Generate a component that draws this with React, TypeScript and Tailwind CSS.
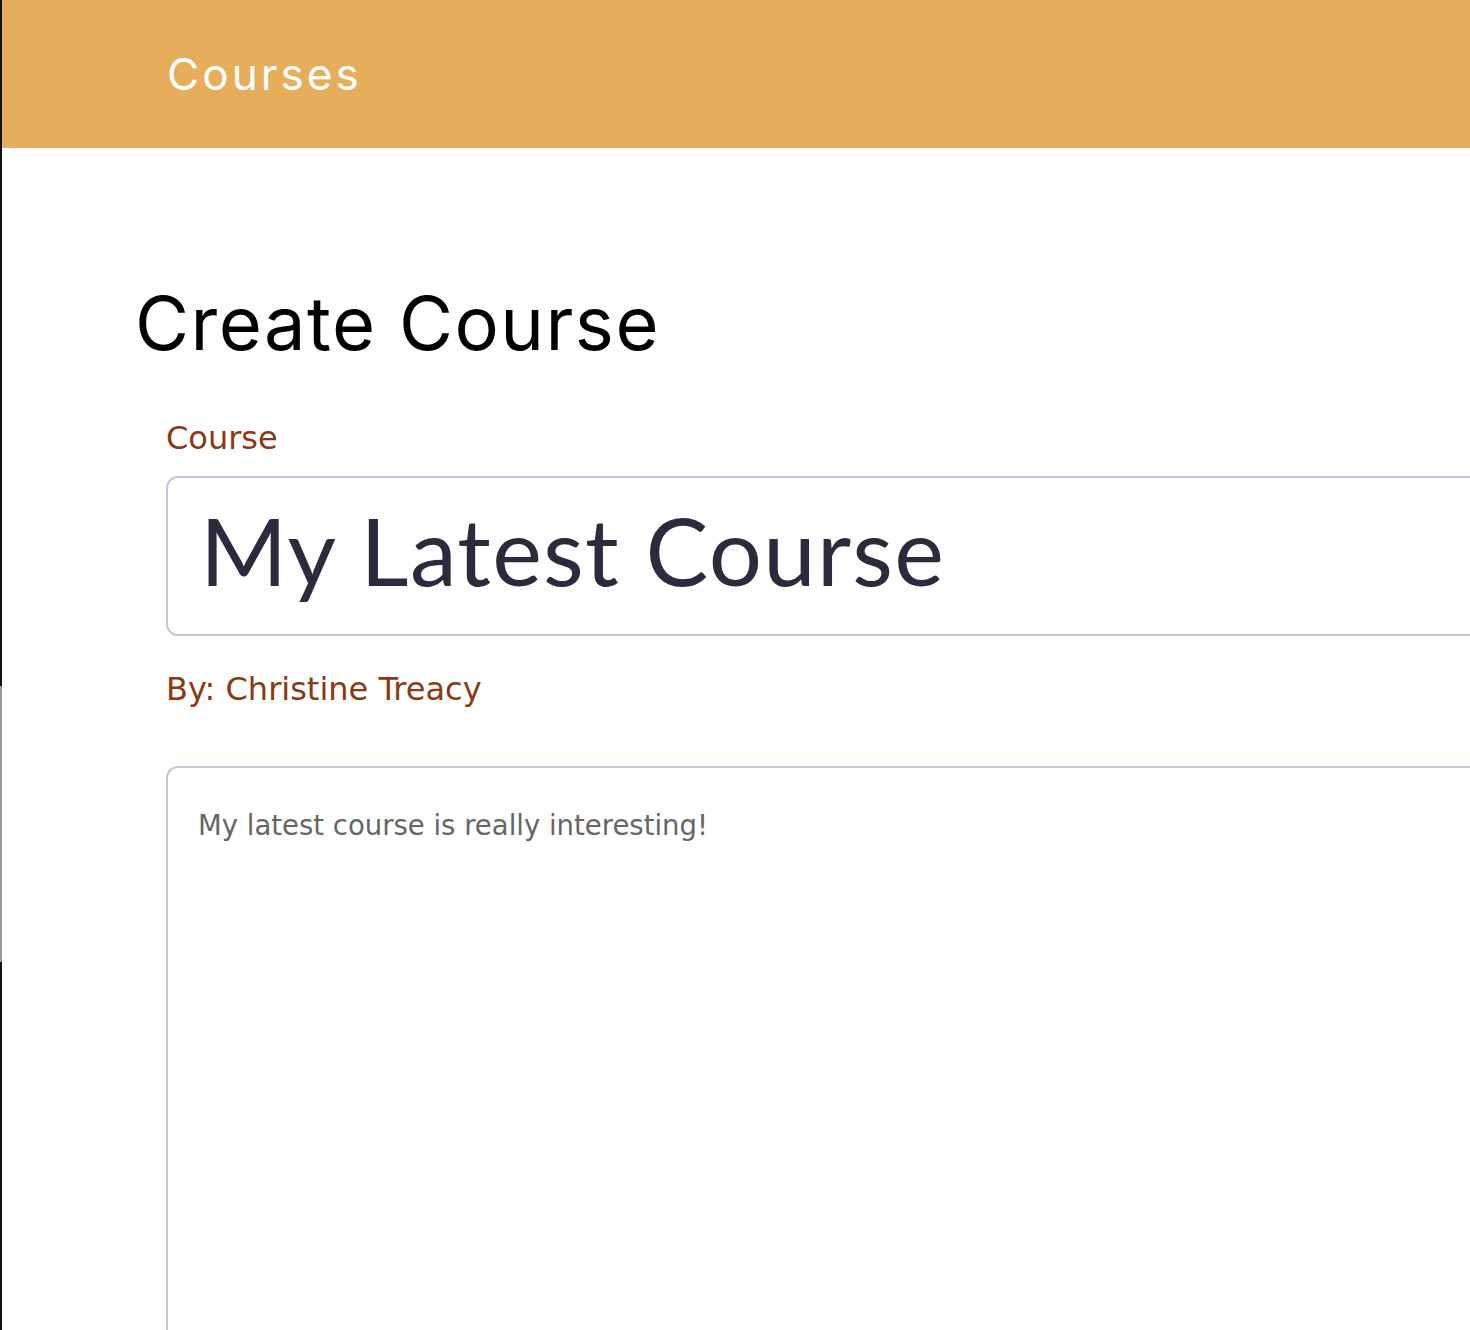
import React from "react";

const heading = { fontFamily: "Inter, 'Noto Sans', sans-serif" };
const body = { fontFamily: "'DejaVu Sans', 'Noto Sans', sans-serif" };
const big = { fontFamily: "Lato, 'Noto Sans', sans-serif" };

export default function App() {
  return (
    <div className="flex min-h-[1330px] w-[1470px] overflow-hidden bg-white">
      {/* left window edge */}
      <div className="flex w-[2px] shrink-0 flex-col">
        <div className="h-[686px] bg-[#111111]" />
        <div className="h-[276px] bg-[#9a9a9a]" />
        <div className="flex-1 bg-[#111111]" />
      </div>

      <div className="flex min-w-0 flex-1 flex-col">
        <header className="flex h-[148px] items-center bg-[#e6ae5a] pl-[165px]">
          <h1 className="text-[44px] leading-none tracking-[0.07em] text-white" style={heading}>
            Courses
          </h1>
        </header>

        <main className="pl-[133px] pt-[138px]">
          <h2 className="text-[74px] leading-none tracking-[0.02em] text-black" style={heading}>
            Create Course
          </h2>

          <form className="flex flex-col pl-[31px] pt-[62px]" style={body}>
            <label className="text-[32px] leading-none text-[#8a3a12]">Course</label>
            <input
              className="mt-[22px] h-[160px] w-[1400px] rounded-[12px] border-2 border-[#c9c3d8] px-[32px] pb-[14px] text-[94px] tracking-[0.014em] text-[#2e293d] outline-none"
              defaultValue="My Latest Course"
              style={big}
            />
            <p className="mt-[37px] text-[32px] leading-none text-[#8a3a12]">
              By: Christine Treacy
            </p>
            <textarea
              className="mt-[61px] h-[620px] w-[1400px] resize-none rounded-[12px] border-2 border-[#c9c3d8] px-[30px] pt-[40px] text-[27.5px] leading-tight text-[#666666] outline-none"
              defaultValue="My latest course is really interesting!"
              style={body}
            />
          </form>
        </main>
      </div>
    </div>
  );
}
